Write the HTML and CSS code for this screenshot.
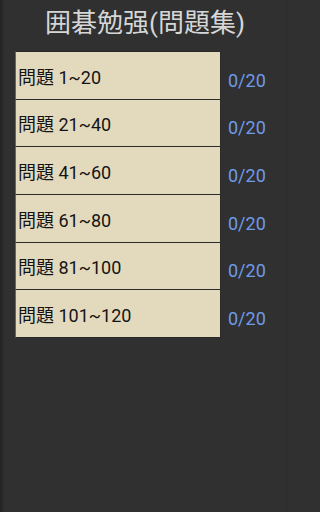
FILE: index.html
```html
<!DOCTYPE html>
<html>
<head>
<meta charset="utf-8">
<link rel="stylesheet" href="styles.css">
</head>
<body>
<div class="screen">
  <h1 class="title">囲碁勉强(問題集)</h1>
  <div class="list">
    <div class="row"><div class="btn">問題 1~20</div><div class="count">0/20</div></div>
    <div class="row"><div class="btn">問題 21~40</div><div class="count">0/20</div></div>
    <div class="row"><div class="btn">問題 41~60</div><div class="count">0/20</div></div>
    <div class="row"><div class="btn">問題 61~80</div><div class="count">0/20</div></div>
    <div class="row"><div class="btn">問題 81~100</div><div class="count">0/20</div></div>
    <div class="row last"><div class="btn">問題 101~120</div><div class="count">0/20</div></div>
  </div>
</div>
</body>
</html>
```
FILE: styles.css
```css
html, body {
  margin: 0;
  padding: 0;
  height: 512px;
  overflow: hidden;
  background: #303030;
  font-family: Roboto, "Noto Sans CJK JP", sans-serif;
}
.screen {
  width: 288px;
  height: 512px;
  box-sizing: border-box;
  background: linear-gradient(to right, #232323 0px, #2b2b2b 3px, #303030 4px, #303030 286px, #2c2c2c 288px);
  display: flex;
  flex-direction: column;
}
.title {
  margin: 0;
  height: 51px;
  box-sizing: border-box;
  padding: 6px 0 0 2px;
  text-align: center;
  font-size: 26px;
  font-weight: normal;
  line-height: 34px;
  color: #d6d6d6;
}
.list {
  display: flex;
  flex-direction: column;
  padding-left: 15px;
}
.row {
  display: flex;
  height: 47.67px;
}
.btn {
  width: 206px;
  box-sizing: border-box;
  background: #e3dabe;
  border-top: 1px solid #2a2a28;
  border-left: 1px solid #6b675c;
  border-right: 1px solid #2a2a28;
  display: flex;
  align-items: center;
  padding-left: 2px;
  font-size: 18px;
  color: #141414;
  height: 48.67px;
}
.row.last .btn {
  border-bottom: 1px solid #2a2a28;
}
.count {
  margin-left: 7px;
  padding-top: 11px;
  display: flex;
  align-items: center;
  font-size: 18px;
  color: #6f9be8;
}
```
